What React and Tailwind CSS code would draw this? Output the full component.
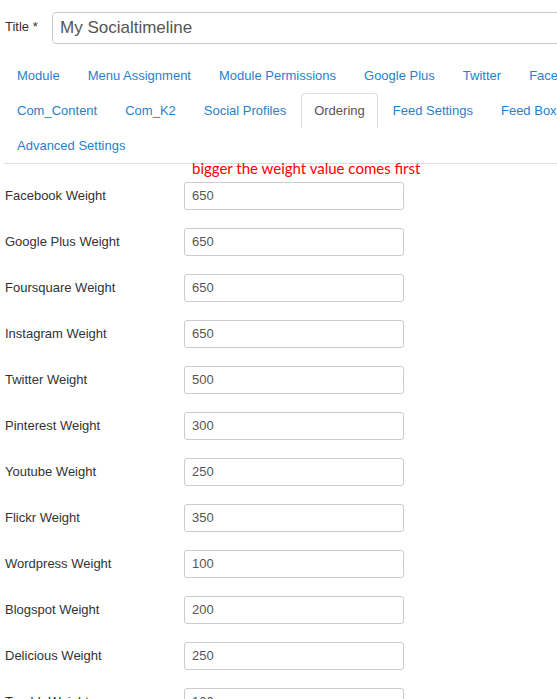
import React from "react";

const tabs1 = ["Module", "Menu Assignment", "Module Permissions", "Google Plus", "Twitter", "Facebook"];
const tabs2 = ["Com_Content", "Com_K2", "Social Profiles", "Ordering", "Feed Settings", "Feed Box"];
const tabs3 = ["Advanced Settings"];

const rows = [
  ["Facebook Weight", "650"],
  ["Google Plus Weight", "650"],
  ["Foursquare Weight", "650"],
  ["Instagram Weight", "650"],
  ["Twitter Weight", "500"],
  ["Pinterest Weight", "300"],
  ["Youtube Weight", "250"],
  ["Flickr Weight", "350"],
  ["Wordpress Weight", "100"],
  ["Blogspot Weight", "200"],
  ["Delicious Weight", "250"],
  ["Tumblr Weight", "100"],
];

function Tab({ label }) {
  const active = label === "Ordering";
  return (
    <div
      className={
        "shrink-0 h-[35px] px-[12px] mr-[2px] border rounded-t-[4px] flex items-center text-[13px] leading-[18px] whitespace-nowrap " +
        (active
          ? "border-[#dddddd] border-b-transparent bg-white text-[#555555]"
          : "border-transparent text-[#2a7fc9]")
      }
    >
      {label}
    </div>
  );
}

export default function App() {
  return (
    <div
      className="w-[557px] h-[699px] overflow-hidden bg-white text-[#333333]"
      style={{ fontFamily: '"Liberation Sans", Arial, sans-serif' }}
    >
      <div className="flex items-start pt-[12px]">
        <div className="shrink-0 w-[52px] pl-[5px] h-[29px] flex items-center text-[13px] whitespace-nowrap">Title *</div>
        <div className="shrink-0 w-[540px] h-[32px] border border-[#cccccc] rounded-[4px] flex items-center pl-[7px] text-[17px] text-[#555555]">
          My Socialtimeline
        </div>
      </div>

      <div className="ml-[4px] mt-[14px] border-b border-[#dddddd] flex flex-col">
        <div className="flex flex-nowrap">
          {tabs1.map((t) => (
            <Tab key={t} label={t} />
          ))}
        </div>
        <div className="flex flex-nowrap">
          {tabs2.map((t) => (
            <Tab key={t} label={t} />
          ))}
        </div>
        <div className="flex flex-nowrap">
          {tabs3.map((t) => (
            <Tab key={t} label={t} />
          ))}
        </div>
      </div>

      <div className="h-[14px] pl-[192px]">
        <div
          className="-mt-[5px] text-[15px] leading-[18px] text-[#ff0000] whitespace-nowrap"
          style={{ fontFamily: 'Lato, "Open Sans", sans-serif' }}
        >
          bigger the weight value comes first
        </div>
      </div>

      <div className="flex flex-col">
        {rows.map(([label, val]) => (
          <div key={label} className="h-[46px] flex items-center">
            <div className="w-[184px] pl-[5px] text-[13px] text-[#333333]">{label}</div>
            <div className="w-[220px] h-[28px] border border-[#cccccc] rounded-[3px] flex items-center pl-[7px] text-[13px] text-[#555555]">
              {val}
            </div>
          </div>
        ))}
      </div>
    </div>
  );
}
